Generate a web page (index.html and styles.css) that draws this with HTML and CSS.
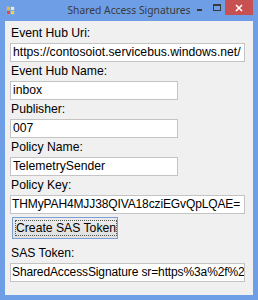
FILE: index.html
```html
<!DOCTYPE html>
<html lang="en">
  <head>
    <meta charset="UTF-8" />
    <title>Shared Access Signatures</title>
    <link rel="stylesheet" href="styles.css">
  </head>
  <body>
    <div class="window">
      <!-- Title bar -->
      <div class="title-bar">
        <svg class="app-icon" width="9" height="9" viewBox="0 0 9 9">
          <rect x="0" y="0" width="9" height="9" fill="#7fa7d9"/>
          <rect x="1" y="1" width="3" height="3" fill="#f2b632"/>
          <rect x="5" y="1" width="3" height="3" fill="#e8e8e8"/>
          <rect x="1" y="5" width="3" height="3" fill="#e04b3a"/>
          <rect x="5" y="5" width="3" height="3" fill="#f4d04a"/>
        </svg>
        <span class="title">Shared Access Signatures</span>
        <span class="btn-min"></span>
        <span class="btn-max"></span>
        <span class="btn-close">
          <svg width="8" height="8" viewBox="0 0 8 8">
            <path d="M1 1 L7 7 M7 1 L1 7" stroke="#fff" stroke-width="1.6"/>
          </svg>
        </span>
      </div>

      <!-- Form -->
      <div class="client">
        <label class="field-label">Event Hub Uri:</label>
        <div class="textbox wide">https://contosoiot.servicebus.windows.net/</div>

        <label class="field-label">Event Hub Name:</label>
        <div class="textbox">inbox</div>

        <label class="field-label">Publisher:</label>
        <div class="textbox">007</div>

        <label class="field-label">Policy Name:</label>
        <div class="textbox">TelemetrySender</div>

        <label class="field-label">Policy Key:</label>
        <div class="textbox wide tight">THMyPAH4MJJ38QIVA18cziEGvQpLQAE=</div>

        <button class="sas-btn"><span>Create SAS Token</span></button>

        <label class="field-label token-label">SAS Token:</label>
        <div class="textbox wide tight">SharedAccessSignature sr=https%3a%2f%2</div>
      </div>
    </div>
  </body>
</html>
```

FILE: styles.css
```css
body {
  margin: 0;
  padding: 0;
  font-family: "Liberation Sans", Arial, sans-serif;
}

.window {
  width: 258px;
  height: 300px;
  background-color: #6e9fe6;
  display: flex;
  flex-direction: column;
  padding: 0 5px 5px 5px;
  box-sizing: border-box;
}

/* Title bar */
.title-bar {
  height: 21px;
  position: relative;
  display: flex;
  align-items: center;
  justify-content: center;
}

.app-icon {
  position: absolute;
  left: 1px;
  top: 6px;
}

.title {
  font-family: "Noto Sans", sans-serif;
  font-size: 10.3px;
  color: #3a3a3a;
  margin-top: -2px;
}

.btn-min {
  position: absolute;
  left: 192px;
  top: 9px;
  width: 5px;
  height: 2px;
  background-color: #3a3a3a;
}

.btn-max {
  position: absolute;
  left: 208px;
  top: 4px;
  width: 6px;
  height: 4px;
  border: 1px solid #3a3a3a;
  border-top-width: 2px;
}

.btn-close {
  position: absolute;
  left: 220px;
  top: 0;
  width: 28px;
  height: 15px;
  background-color: #c75050;
  display: flex;
  align-items: center;
  justify-content: center;
}

/* Client area */
.client {
  flex: 1;
  background-color: #f0f0f0;
  padding: 3px 0 0 5px;
  display: flex;
  flex-direction: column;
  align-items: flex-start;
}

.field-label {
  display: block;
  font-size: 12.2px;
  line-height: 19px;
  height: 19px;
  color: #000;
  padding-left: 1px;
}

.textbox {
  width: 168px;
  height: 19px;
  box-sizing: border-box;
  border: 1px solid #c4c4c4;
  background-color: white;
  font-size: 12.2px;
  line-height: 17px;
  padding-left: 2px;
  white-space: nowrap;
  overflow: hidden;
}

.textbox.wide {
  width: 235px;
}

/* long values that fill the whole box */
.textbox.tight {
  font-size: 12px;
  letter-spacing: -0.12px;
  padding-left: 1px;
}

.sas-btn {
  margin-top: 3px;
  margin-left: 2px;
  width: 106px;
  height: 22px;
  padding: 2px;
  border: 1px solid #7aa0d4;
  background: linear-gradient(#ececec, #dfdfdf);
  font-family: "Liberation Sans", Arial, sans-serif;
  font-size: 12.2px;
  color: #000;
  white-space: nowrap;
  display: flex;
}

.sas-btn span {
  flex: 1;
  display: flex;
  align-items: center;
  justify-content: center;
  border: 1px dotted #555;
}

.token-label {
  margin-top: 5px;
}
```
